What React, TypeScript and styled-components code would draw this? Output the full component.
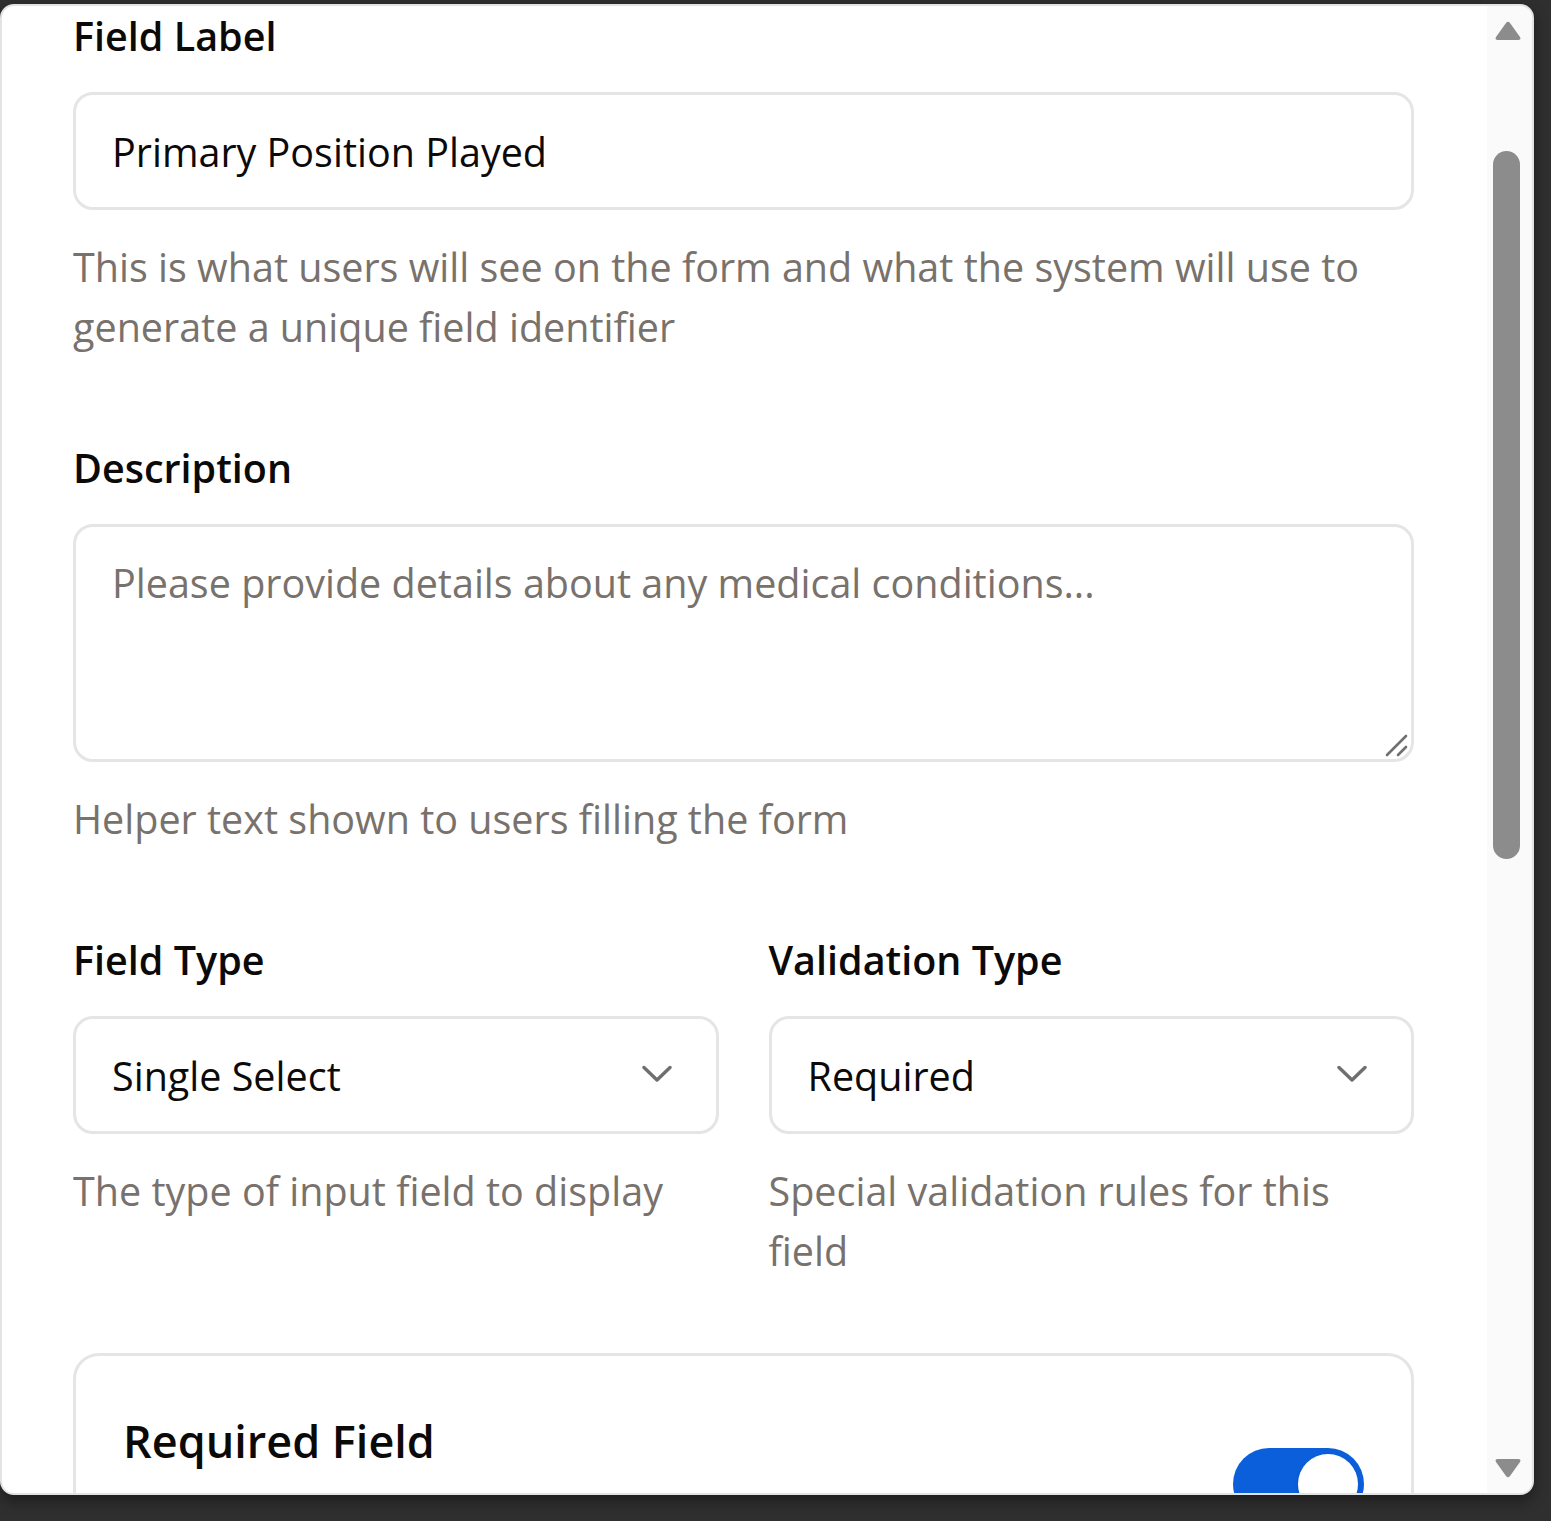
import styled, { createGlobalStyle } from 'styled-components';

const GlobalStyle = createGlobalStyle`
  html, body {
    margin: 0;
    padding: 0;
    background: #2f2f2f;
  }
  * {
    box-sizing: border-box;
  }
`

const FONT = `"Open Sans", "Noto Sans", "Liberation Sans", sans-serif`

function ChevronDown() {
  return (
    <svg width="30" height="18" viewBox="0 0 30 18" fill="none">
      <polyline points="2,2.5 15,15 28,2.5" stroke="#6f6f6f" strokeWidth="3.4" strokeLinecap="round" strokeLinejoin="round" />
    </svg>
  )
}

function ResizeGrip() {
  return (
    <svg width="26" height="26" viewBox="0 0 26 26" fill="none">
      <line x1="3" y1="23" x2="22" y2="4" stroke="#707070" strokeWidth="2.6" strokeLinecap="round" />
      <line x1="14" y1="23" x2="22" y2="15" stroke="#707070" strokeWidth="2.6" strokeLinecap="round" />
    </svg>
  )
}

function ArrowUp() {
  return (
    <svg width="28" height="22" viewBox="0 0 28 22">
      <path d="M12 3 Q14 0.5 16 3 L26 17 Q27.5 20 24 20 L4 20 Q0.5 20 2 17 Z" fill="#8c8c8c" />
    </svg>
  )
}

function ArrowDown() {
  return (
    <svg width="28" height="22" viewBox="0 0 28 22">
      <path d="M12 19 Q14 21.5 16 19 L26 5 Q27.5 2 24 2 L4 2 Q0.5 2 2 5 Z" fill="#8c8c8c" />
    </svg>
  )
}

function App() {
  return (
    <StPage>
      <GlobalStyle />
      <StPanel>
        <StContent>
          <StFieldGroup>
            <StLabel>Field Label</StLabel>
            <StInput defaultValue="Primary Position Played" readOnly />
            <StHelper>
              This is what users will see on the form and what the system will use to
              generate a unique field identifier
            </StHelper>
          </StFieldGroup>

          <StFieldGroup>
            <StLabel>Description</StLabel>
            <StTextareaWrap>
              <StTextarea placeholder="Please provide details about any medical conditions..." readOnly />
              <StGrip>
                <ResizeGrip />
              </StGrip>
            </StTextareaWrap>
            <StHelper>Helper text shown to users filling the form</StHelper>
          </StFieldGroup>

          <StFieldGroup>
            <StTwoCols>
              <div>
                <StLabel>Field Type</StLabel>
                <StSelect>
                  <span>Single Select</span>
                  <ChevronDown />
                </StSelect>
                <StHelper>The type of input field to display</StHelper>
              </div>
              <div>
                <StLabel>Validation Type</StLabel>
                <StSelect>
                  <span>Required</span>
                  <ChevronDown />
                </StSelect>
                <StHelper>Special validation rules for this field</StHelper>
              </div>
            </StTwoCols>
          </StFieldGroup>

          <StCard>
            <StCardRow>
              <StCardTitle>Required Field</StCardTitle>
              <StToggle $on>
                <StKnob />
              </StToggle>
            </StCardRow>
          </StCard>
        </StContent>

        <StScrollbar>
          <StArrowSlot>
            <ArrowUp />
          </StArrowSlot>
          <StTrack>
            <StThumb />
          </StTrack>
          <StArrowSlot>
            <ArrowDown />
          </StArrowSlot>
        </StScrollbar>
      </StPanel>
    </StPage>
  )
}

export default App

const StPage = styled.div`
  height: 1521px;
  padding-top: 4px;
  background: #2f2f2f;
  font-family: ${FONT};
  overflow: hidden;
`

const StPanel = styled.div`
  width: 1534px;
  height: 1491px;
  display: flex;
  background: #ffffff;
  border: 2px solid #e3e3e3;
  border-radius: 14px;
  overflow: hidden;
  box-shadow: 0 6px 14px rgba(0, 0, 0, 0.4);
`

const StContent = styled.div`
  flex: 1;
  padding: 0 73px 0 71px;
  overflow: hidden;
  display: flex;
  flex-direction: column;
`

const StFieldGroup = styled.div`
  display: flex;
  flex-direction: column;

  & + & {
    margin-top: 81px;
  }
`

const StLabel = styled.div`
  font-size: 39.5px;
  font-weight: 600;
  line-height: 60px;
  color: #0c0a09;
  margin-bottom: 26px;
`

const StInput = styled.input`
  width: 100%;
  height: 118px;
  padding: 2px 36px 0;
  border: 3px solid #e7e5e4;
  border-radius: 20px;
  font-family: ${FONT};
  font-size: 39.5px;
  color: #0c0a09;
  background: #ffffff;
  outline: none;
`

const StHelper = styled.p`
  margin: 27px 0 0;
  font-size: 39.5px;
  line-height: 60px;
  color: #78716c;
`

const StTextareaWrap = styled.div`
  position: relative;
  height: 238px;
`

const StTextarea = styled.textarea`
  display: block;
  width: 100%;
  height: 100%;
  padding: 26px 36px;
  border: 3px solid #e7e5e4;
  border-radius: 20px;
  font-family: ${FONT};
  font-size: 39.5px;
  line-height: 60px;
  color: #0c0a09;
  resize: none;
  outline: none;

  &::placeholder {
    color: #78716c;
  }
`

const StGrip = styled.div`
  position: absolute;
  right: 4px;
  bottom: 4px;
  display: flex;
`

const StTwoCols = styled.div`
  display: grid;
  grid-template-columns: 1fr 1fr;
  column-gap: 50px;
`

const StSelect = styled.div`
  height: 118px;
  display: flex;
  align-items: center;
  justify-content: space-between;
  padding: 2px 44px 0 36px;
  border: 3px solid #e7e5e4;
  border-radius: 20px;
  font-size: 39.5px;
  color: #0c0a09;

  & > svg {
    margin-top: -4px;
  }
`

const StCard = styled.div`
  margin-top: 72px;
  flex-shrink: 0;
  border: 3px solid #e7e5e4;
  border-radius: 26px;
  padding: 50px 47px 50px 47px;
  min-height: 260px;
`

const StCardRow = styled.div`
  display: flex;
  justify-content: space-between;
  align-items: flex-start;
`

const StCardTitle = styled.div`
  font-size: 45px;
  font-weight: 600;
  line-height: 70px;
  color: #0c0a09;
`

const StToggle = styled.div<{ $on?: boolean }>`
  width: 131px;
  height: 72px;
  margin-top: 42px;
  border-radius: 36px;
  padding: 6px;
  display: flex;
  justify-content: ${p => (p.$on ? 'flex-end' : 'flex-start')};
  background: ${p => (p.$on ? '#0b5fdb' : '#e7e5e4')};
`

const StKnob = styled.div`
  width: 60px;
  height: 60px;
  border-radius: 50%;
  background: #ffffff;
  box-shadow: 0 2px 4px rgba(0, 0, 0, 0.12);
`

const StScrollbar = styled.div`
  width: 45px;
  flex-shrink: 0;
  background: #fafafa;
  display: flex;
  flex-direction: column;
`

const StArrowSlot = styled.div`
  height: 50px;
  display: flex;
  align-items: center;
  justify-content: center;
  padding-right: 4px;
`

const StTrack = styled.div`
  flex: 1;
  padding: 95px 8px 0 6px;
  padding-right: 10px;
`

const StThumb = styled.div`
  width: 27px;
  height: 708px;
  border-radius: 14px;
  background: #8c8c8c;
`
